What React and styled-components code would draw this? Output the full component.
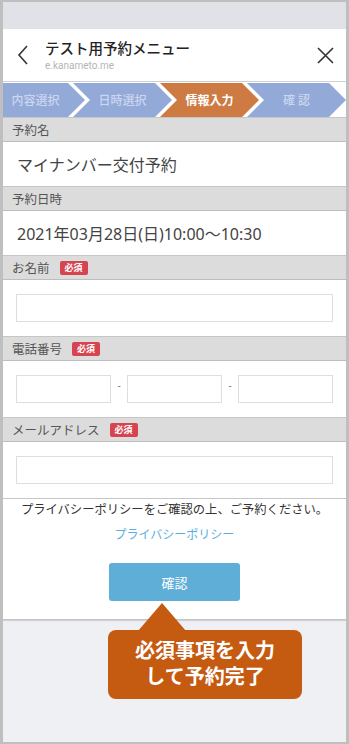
import styled, { createGlobalStyle } from "styled-components";

const GlobalStyle = createGlobalStyle`
  html, body {
    margin: 0;
    padding: 0;
  }
  body {
    font-family: "Noto Sans", "Noto Sans CJK JP", sans-serif;
    color: #444;
  }
  * {
    box-sizing: border-box;
  }
`;

const steps = [
  { label: "内容選択" },
  { label: "日時選択" },
  { label: "情報入力", active: true },
  { label: "確 認" },
];

function App() {
  return (
    <Frame>
      <GlobalStyle />
      <TopBar />
      <Header>
        <IconButton aria-label="back">
          <svg width="12" height="20" viewBox="0 0 12 20">
            <path d="M10 1 L2 10 L10 19" fill="none" stroke="#333" strokeWidth="1.6" />
          </svg>
        </IconButton>
        <TitleBox>
          <Title>テスト用予約メニュー</Title>
          <SubTitle>e.kanameto.me</SubTitle>
        </TitleBox>
        <IconButton aria-label="close">
          <svg width="17" height="17" viewBox="0 0 17 17">
            <path d="M1 1 L16 16 M16 1 L1 16" fill="none" stroke="#333" strokeWidth="1.6" />
          </svg>
        </IconButton>
      </Header>

      <Card>
        <StepRow>
          {steps.map((s, i) => (
            <Step key={s.label} $first={i === 0} $active={s.active}>
              {s.label}
            </Step>
          ))}
        </StepRow>

        <LabelBar>予約名</LabelBar>
        <ValueRow>マイナンバー交付予約</ValueRow>

        <LabelBar>予約日時</LabelBar>
        <ValueRow>2021年03月28日(日)10:00〜10:30</ValueRow>

        <LabelBar>
          お名前<Required>必須</Required>
        </LabelBar>
        <InputRow>
          <TextInput />
        </InputRow>

        <LabelBar>
          電話番号<Required>必須</Required>
        </LabelBar>
        <InputRow>
          <PhoneGrid>
            <TextInput />
            <Dash>-</Dash>
            <TextInput />
            <Dash>-</Dash>
            <TextInput />
          </PhoneGrid>
        </InputRow>

        <LabelBar>
          メールアドレス<Required>必須</Required>
        </LabelBar>
        <InputRow $last>
          <TextInput />
        </InputRow>

        <Footer>
          <Notice>プライバシーポリシーをご確認の上、ご予約ください。</Notice>
          <PolicyLink>プライバシーポリシー</PolicyLink>
          <ConfirmButton>確認</ConfirmButton>
        </Footer>
      </Card>

      <Callout>
        必須事項を入力
        <br />
        して予約完了
      </Callout>
    </Frame>
  );
}

export default App;

const Frame = styled.div`
  position: relative;
  width: 349px;
  height: 744px;
  border: 2px solid #bfbfbf;
  border-left-width: 3px;
  border-right-width: 3px;
  background: #eff0f4;
  overflow: hidden;
`;

const TopBar = styled.div`
  height: 27px;
  background: #e1e2e7;
`;

const Header = styled.div`
  height: 52px;
  background: #fff;
  display: flex;
  align-items: center;
  padding: 0 12px 0 11px;
`;

const IconButton = styled.div`
  display: flex;
  align-items: center;
  justify-content: center;
  width: 17px;
  height: 24px;
`;

const TitleBox = styled.div`
  flex: 1;
  display: flex;
  flex-direction: column;
  padding-left: 14px;
  padding-top: 2px;
`;

const Title = styled.div`
  font-size: 14.5px;
  font-weight: 500;
  color: #222;
  line-height: 19px;
`;

const SubTitle = styled.div`
  font-family: Roboto, "Noto Sans", sans-serif;
  font-size: 10px;
  color: #b5b5b5;
  line-height: 15px;
`;

const Card = styled.div`
  background: #fff;
  border-top: 1px solid #d0d0d0;
  border-bottom: 1px solid #c4c4c4;
  box-shadow: 0 1px 1px rgba(0, 0, 0, 0.12);
  padding-top: 1px;
`;

const StepRow = styled.div`
  display: flex;
  height: 34px;
`;

const Step = styled.div`
  flex: 1;
  margin-left: ${(p) => (p.$first ? "0" : "-12px")};
  padding: 0 17px 0 ${(p) => (p.$first ? "0" : "17px")};
  display: flex;
  align-items: center;
  justify-content: center;
  font-size: 12px;
  font-weight: ${(p) => (p.$active ? 700 : 500)};
  color: ${(p) => (p.$active ? "#fff" : "#cbd5ef")};
  background: ${(p) => (p.$active ? "#cd7a43" : "#93a9d8")};
  clip-path: ${(p) =>
    p.$first
      ? "polygon(0 0, calc(100% - 17px) 0, 100% 50%, calc(100% - 17px) 100%, 0 100%)"
      : "polygon(0 0, calc(100% - 17px) 0, 100% 50%, calc(100% - 17px) 100%, 0 100%, 17px 50%)"};
`;

const LabelBar = styled.div`
  height: 25px;
  display: flex;
  align-items: center;
  padding-left: 9px;
  background: #dcdcdc;
  border-top: 1px solid #c6c6c6;
  border-bottom: 1px solid #bdbdbd;
  font-size: 12.5px;
  color: #555;
`;

const Required = styled.span`
  margin-left: 10px;
  background: #d6444f;
  color: #fff;
  font-size: 9px;
  font-weight: 700;
  line-height: 14px;
  padding: 0 5px;
  border-radius: 2px;
`;

const ValueRow = styled.div`
  height: 44px;
  display: flex;
  align-items: center;
  padding-left: 14px;
  font-size: 16px;
  color: #444;
`;

const InputRow = styled.div`
  padding: 14px 13px;
  border-bottom: ${(p) => (p.$last ? "1px solid #c6c6c6" : "none")};
`;

const TextInput = styled.div`
  height: 28px;
  border: 1px solid #dedede;
  background: #fff;
`;

const PhoneGrid = styled.div`
  display: grid;
  grid-template-columns: 1fr 6px 1fr 6px 1fr;
  gap: 5px;
  align-items: center;
`;

const Dash = styled.span`
  font-size: 10px;
  color: #777;
  text-align: center;
  margin-top: -8px;
`;

const Footer = styled.div`
  display: flex;
  flex-direction: column;
  align-items: center;
  padding: 2px 0 18px;
`;

const Notice = styled.div`
  font-size: 12.3px;
  line-height: 18px;
  color: #333;
`;

const PolicyLink = styled.div`
  margin-top: 7px;
  font-size: 12px;
  line-height: 18px;
  color: #5aaede;
`;

const ConfirmButton = styled.div`
  margin-top: 19px;
  width: 131px;
  height: 38px;
  display: flex;
  align-items: center;
  justify-content: center;
  background: #5eaed8;
  border-radius: 3px;
  color: #fff;
  font-size: 13px;
`;

const Callout = styled.div`
  position: absolute;
  left: 105px;
  top: 628px;
  width: 194px;
  height: 69px;
  background: #c55a11;
  border-radius: 8px;
  color: #fff;
  font-size: 20px;
  font-weight: 700;
  line-height: 26px;
  text-align: center;
  padding-top: 8px;

  &::before {
    content: "";
    position: absolute;
    left: 30px;
    top: -27px;
    border-left: 24px solid transparent;
    border-right: 24px solid transparent;
    border-bottom: 28px solid #c55a11;
  }
`;
